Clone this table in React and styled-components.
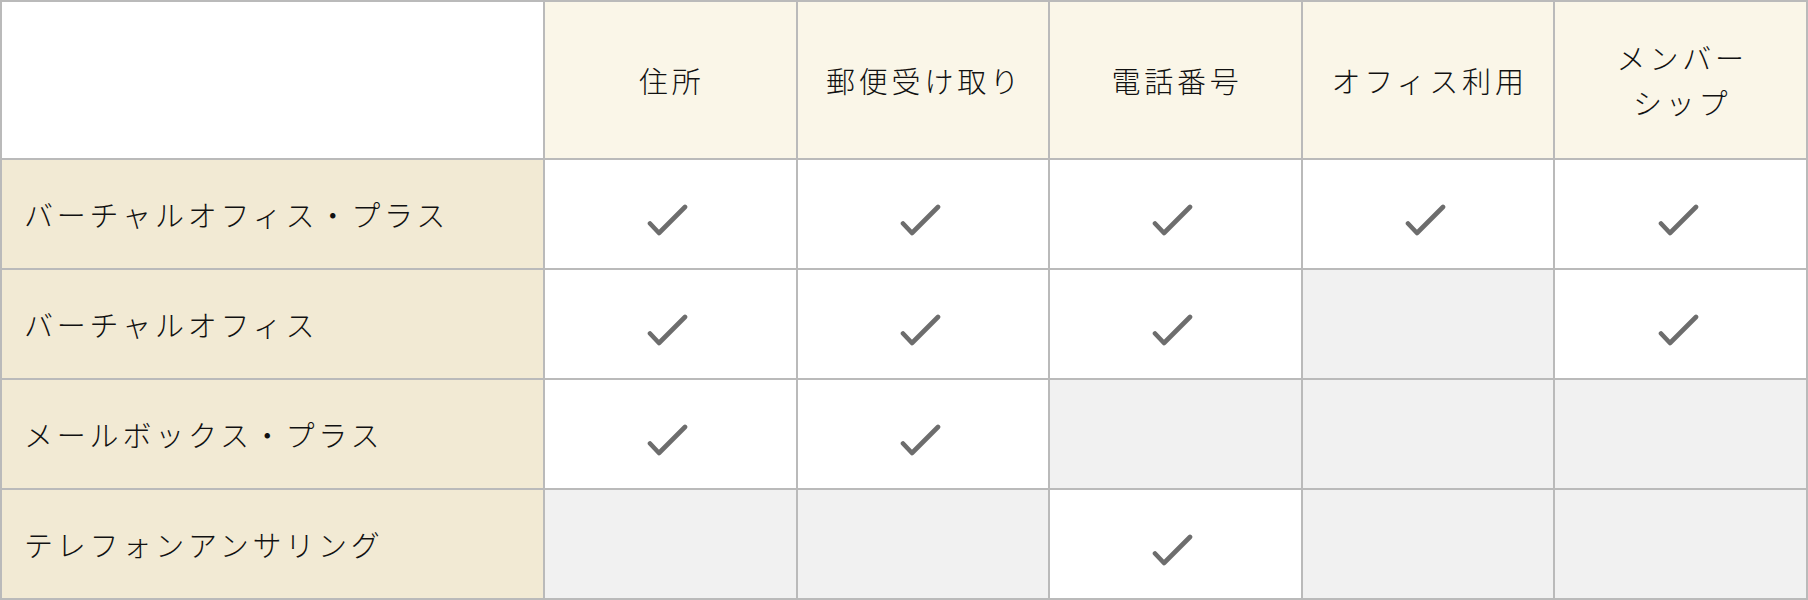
import React from 'react'
import styled, { createGlobalStyle } from 'styled-components'

const GlobalStyle = createGlobalStyle`
  html, body {
    margin: 0;
    padding: 0;
    background: #fff;
  }
  body {
    font-family: "Noto Sans CJK JP", "Noto Sans", sans-serif;
    color: #111111;
  }
`

const services = ['住所', '郵便受け取り', '電話番号', 'オフィス利用', ['メンバー', 'シップ']]

const plans = [
  { name: 'バーチャルオフィス・プラス', has: [1, 1, 1, 1, 1] },
  { name: 'バーチャルオフィス', has: [1, 1, 1, 0, 1] },
  { name: 'メールボックス・プラス', has: [1, 1, 0, 0, 0] },
  { name: 'テレフォンアンサリング', has: [0, 0, 1, 0, 0] },
]

const Check = () => (
  <CheckSvg viewBox="0 0 50 50" width="50" height="50">
    <polyline
      points="5,33.5 14,43 40,17"
      fill="none"
      stroke="#6d6d6d"
      strokeWidth="4.6"
      strokeLinecap="round"
      strokeLinejoin="round"
    />
  </CheckSvg>
)

export default function App() {
  return (
    <>
      <GlobalStyle />
      <Table>
        <Corner />
        {services.map((s, i) => (
          <HeadCell key={`head_${i}`}>
            {Array.isArray(s) ? (
              <span>
                {s[0]}
                <br />
                {s[1]}
              </span>
            ) : (
              s
            )}
          </HeadCell>
        ))}
        {plans.map((plan) => (
          <React.Fragment key={plan.name}>
            <PlanCell>{plan.name}</PlanCell>
            {plan.has.map((on, i) => (
              <MarkCell key={`${plan.name}_${i}`} off={!on}>
                {on ? <Check /> : null}
              </MarkCell>
            ))}
          </React.Fragment>
        ))}
      </Table>
    </>
  )
}

const Table = styled.div`
  display: grid;
  grid-template-columns: 541px repeat(5, 1fr);
  grid-template-rows: 156px repeat(4, 108px);
  gap: 2px;
  padding: 2px;
  width: 1808px;
  box-sizing: border-box;
  background: #bababa;
`

const Cell = styled.div`
  display: flex;
  align-items: center;
  font-size: 29px;
  font-weight: 300;
  letter-spacing: 3.8px;
  line-height: 1.55;
`

const Corner = styled(Cell)`
  background: #ffffff;
`

const HeadCell = styled(Cell)`
  justify-content: center;
  text-align: center;
  background: #faf6e8;
  padding-left: 3px;
`

const PlanCell = styled(Cell)`
  background: #f2ead4;
  padding: 0 22px;
`

const MarkCell = styled(Cell)`
  justify-content: center;
  background: ${(p) => (p.off ? '#f1f1f1' : '#ffffff')};
`

const CheckSvg = styled.svg`
  display: block;
  margin-left: 0;
  margin-top: 2px;
  filter: blur(0.6px);
`
